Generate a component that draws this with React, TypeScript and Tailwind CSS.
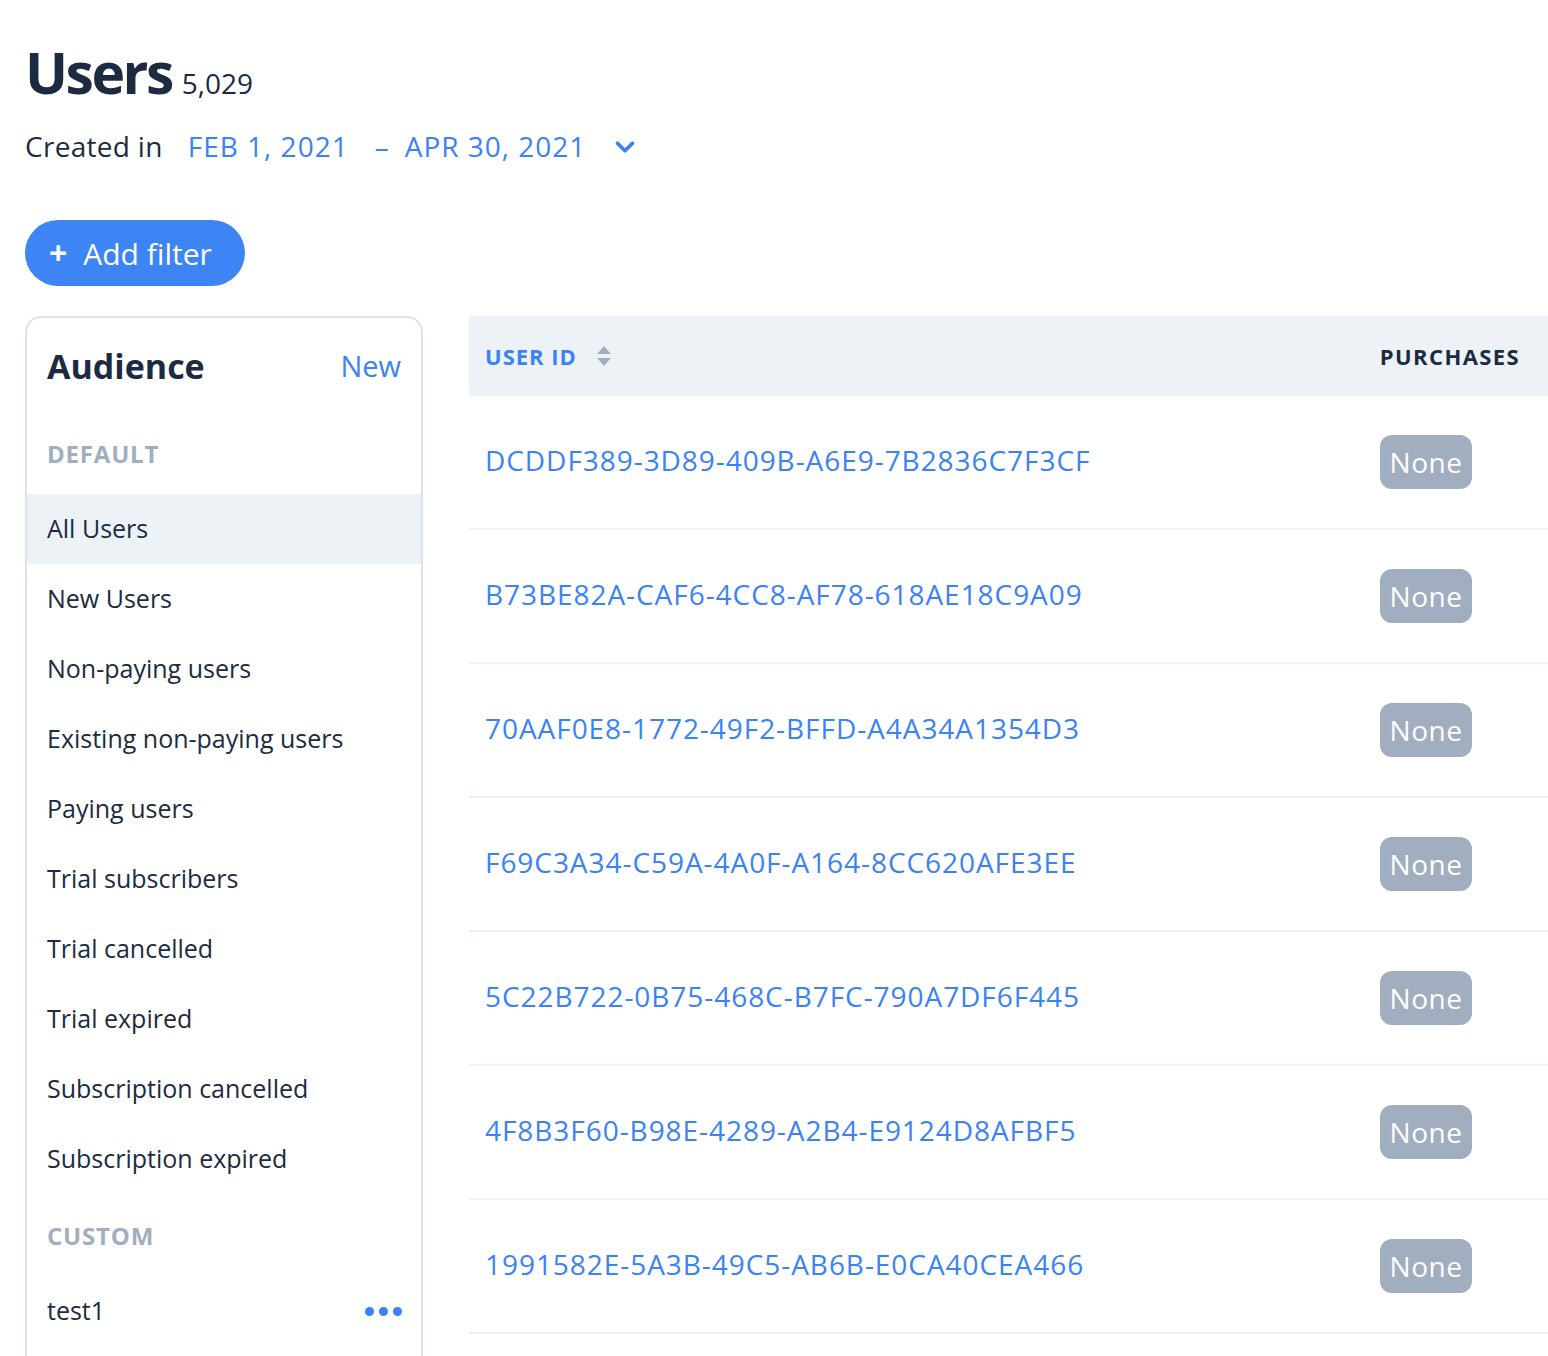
import { ChevronDown } from 'lucide-react'

const defaults = [
  'All Users',
  'New Users',
  'Non-paying users',
  'Existing non-paying users',
  'Paying users',
  'Trial subscribers',
  'Trial cancelled',
  'Trial expired',
  'Subscription cancelled',
  'Subscription expired',
]

const users = [
  'DCDDF389-3D89-409B-A6E9-7B2836C7F3CF',
  'B73BE82A-CAF6-4CC8-AF78-618AE18C9A09',
  '70AAF0E8-1772-49F2-BFFD-A4A34A1354D3',
  'F69C3A34-C59A-4A0F-A164-8CC620AFE3EE',
  '5C22B722-0B75-468C-B7FC-790A7DF6F445',
  '4F8B3F60-B98E-4289-A2B4-E9124D8AFBF5',
  '1991582E-5A3B-49C5-AB6B-E0CA40CEA466',
]

function SortIcon() {
  return (
    <svg width="16" height="24" viewBox="0 0 16 24" className="ml-[19px]">
      <path d="M8 2 L15 10 H1 Z" fill="#a0aec0" />
      <path d="M8 22 L15 14 H1 Z" fill="#a0aec0" />
    </svg>
  )
}

export default function App() {
  return (
    <div className="min-h-[1356px] bg-white text-[#1c2b41] font-['Open_Sans',sans-serif] overflow-hidden">
      <div className="pl-[25px] pt-[40px]">
        <div className="flex items-baseline gap-[10px]">
          <h1 className="text-[57px] leading-[64px] font-bold tracking-[-2.5px]">Users</h1>
          <span className="text-[28px]">5,029</span>
        </div>

        <div className="flex items-center mt-[20px] text-[28px] h-[44px]">
          <span className="tracking-[0.3px]">Created in</span>
          <span className="ml-[25px] text-[#3b82f6] tracking-[1px]">FEB 1, 2021</span>
          <span className="ml-[26px] text-[#3b82f6]">–</span>
          <span className="ml-[16px] text-[#3b82f6] tracking-[1px]">APR 30, 2021</span>
          <ChevronDown className="ml-[24px] mt-[2px] text-[#3b82f6]" size={30} strokeWidth={3} />
        </div>

        <button className="mt-[52px] h-[66px] w-[220px] rounded-full bg-[#3d84f5] text-white flex items-center pl-[24px] text-[30px]">
          <span className="text-[32px] font-bold leading-none mr-[16px]">+</span>
          Add filter
        </button>
      </div>

      <div className="flex mt-[30px] pl-[25px] gap-[46px]">
        <aside className="w-[398px] shrink-0 border-2 border-b-0 border-[#dbe3ec] rounded-t-[16px] h-[1040px]">
          <div className="flex items-center justify-between px-[20px] pt-[2px] h-[94px]">
            <h2 className="text-[34px] font-bold">Audience</h2>
            <span className="text-[29px] text-[#3b82f6]">New</span>
          </div>
          <div className="px-[20px] pt-[2px] h-[82px] text-[24px] font-bold text-[#a0aec0] flex items-center tracking-[0.8px]">
            DEFAULT
          </div>
          {defaults.map((d, i) => (
            <div
              key={d}
              className={`h-[70px] flex items-center px-[20px] text-[25px] ${i === 0 ? 'bg-[#edf2f7]' : ''}`}
            >
              {d}
            </div>
          ))}
          <div className="px-[20px] h-[82px] pt-[2px] text-[24px] font-bold text-[#a0aec0] flex items-center tracking-[0.8px]">
            CUSTOM
          </div>
          <div className="h-[70px] flex items-center justify-between px-[20px] text-[25px]">
            <span>test1</span>
            <div className="flex gap-[5px] mr-[-1px]">
              <span className="w-[9px] h-[9px] rounded-full bg-[#3b82f6]" />
              <span className="w-[9px] h-[9px] rounded-full bg-[#3b82f6]" />
              <span className="w-[9px] h-[9px] rounded-full bg-[#3b82f6]" />
            </div>
          </div>
        </aside>

        <div className="flex-1">
          <div className="h-[80px] bg-[#edf2f7] flex items-center justify-between pl-[16px] pr-[28px]">
            <div className="flex items-center text-[22px] font-bold text-[#3b82f6] tracking-[1px]">
              USER ID
              <SortIcon />
            </div>
            <span className="text-[22px] font-bold tracking-[1.4px]">PURCHASES</span>
          </div>
          {users.map((u) => (
            <div
              key={u}
              className="h-[134px] flex items-center justify-between border-b-2 border-[#edf2f7] pl-[16px] pr-[76px]"
            >
              <span className="text-[28px] text-[#3b82f6] tracking-[0.95px] -mt-[4px]">{u}</span>
              <span className="h-[54px] w-[92px] rounded-[12px] bg-[#a0aec0] text-white text-[28px] flex items-center justify-center tracking-[0.5px]">
                None
              </span>
            </div>
          ))}
        </div>
      </div>
    </div>
  )
}
